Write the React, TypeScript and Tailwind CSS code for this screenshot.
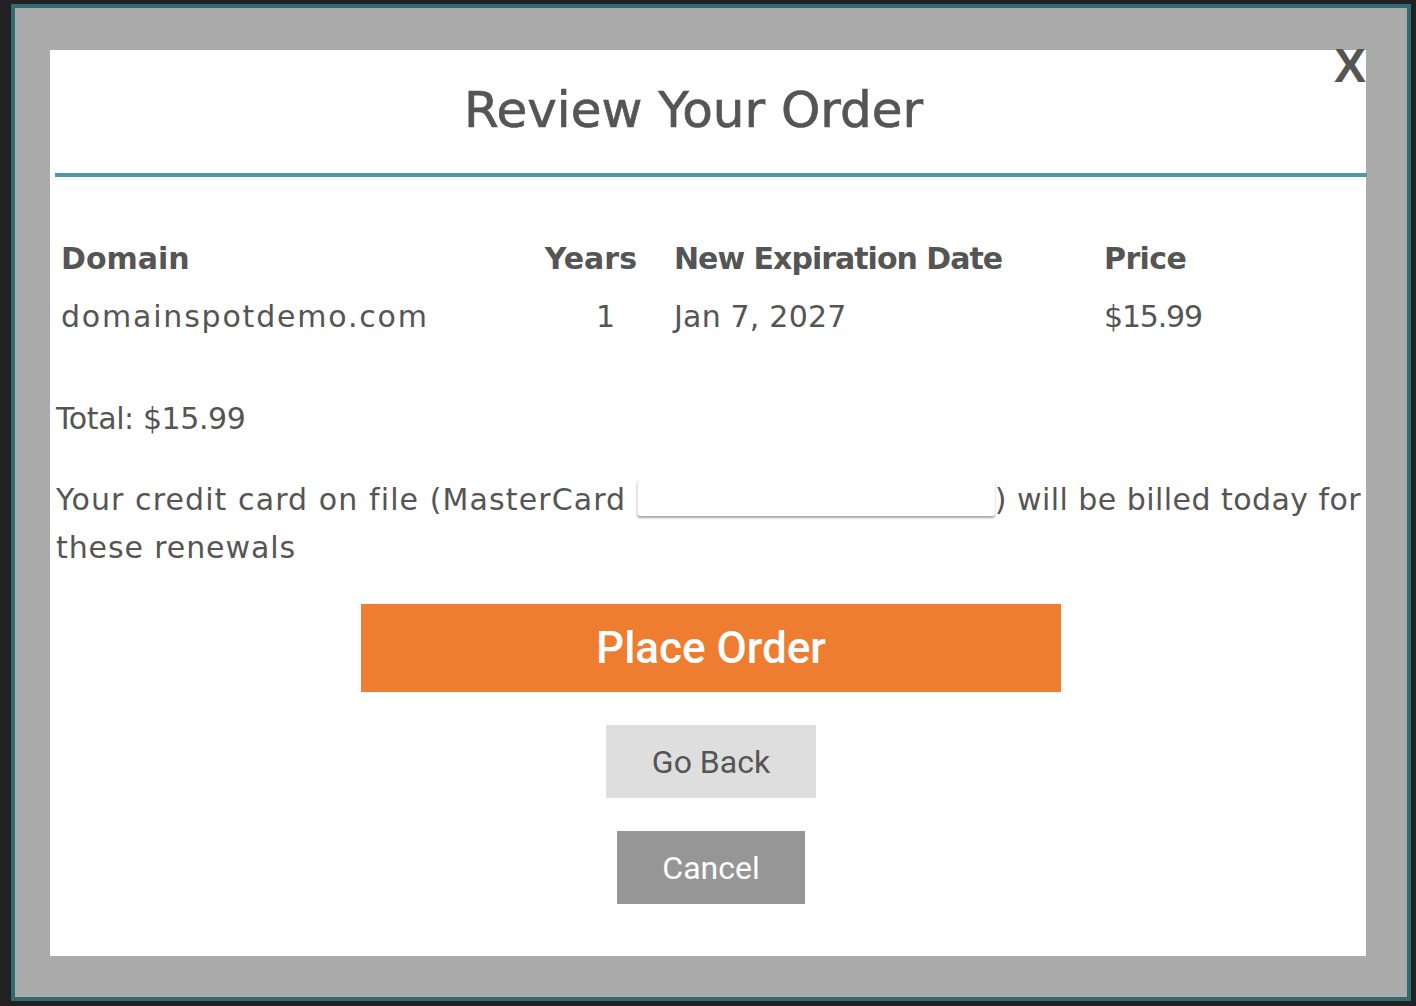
import React from "react";

const body = { fontFamily: '"DejaVu Sans", sans-serif' };
const btn = { fontFamily: 'Roboto, "Liberation Sans", sans-serif' };

export default function App() {
  return (
    <div className="w-full h-[1006px] bg-[#212121] pt-[4px] pl-[11px] overflow-hidden">
      <div className="w-[1400px] h-[997px] border-[4px] border-[#2f6b70] bg-[#ababab] pl-[35px] pt-[42px]">
        <div
          className="relative w-[1316px] h-[906px] bg-white flex flex-col text-[#555555]"
          style={body}
        >
          <span
            className="absolute right-0 top-[-8px] text-[48px] leading-[48px] font-bold text-[#555555]"
            style={{ fontFamily: '"Liberation Sans", Arial, sans-serif' }}
          >
            X
          </span>

          <div className="mt-[30px] pl-[5px] pr-[34px] text-center text-[50px] leading-[60px] [-webkit-text-stroke:0.7px_#555555]">
            Review Your Order
          </div>

          <div className="mt-[33px] ml-[5px] -mr-px h-[4px] bg-[#4a9ba3]" />

          <div className="pl-[6px] flex flex-col">
            <div className="mt-[53px] pl-[5px] grid grid-cols-[459px_117px_467px_1fr] text-[30px] leading-[48px]">
              <div className="py-[5px] font-bold">Domain</div>
              <div className="py-[5px] font-bold text-right">Years</div>
              <div className="py-[5px] font-bold pl-[37px] tracking-[-1px]">New Expiration Date</div>
              <div className="py-[5px] font-bold tracking-[-0.6px]">Price</div>

              <div className="py-[5px] tracking-[1.8px]">domainspotdemo.com</div>
              <div className="py-[5px] text-right pr-[22px]">1</div>
              <div className="py-[5px] pl-[37px] tracking-[0.2px]">Jan 7, 2027</div>
              <div className="py-[5px] tracking-[-1.2px]">$15.99</div>
            </div>

            <div className="mt-[49px] text-[30px] leading-[48px] tracking-[-0.4px]">Total: $15.99</div>

            <div className="mt-[33px] text-[30px] leading-[48px]">
              <div className="whitespace-nowrap">
                <span className="tracking-[1.1px]">Your credit card on file (MasterCard </span>
                <span className="inline-block w-[358px] h-[36px] align-[-6px] bg-white border-l border-[#e2e2e2] rounded-[3px] shadow-[0_2px_2px_rgba(0,0,0,0.35)]" />
                <span className="tracking-[0.45px]">) will be billed today for</span>
              </div>
              <div className="tracking-[0.9px]">these renewals</div>
            </div>

            <button
              className="mt-[32px] self-center w-[700px] h-[88px] bg-[#ee7d31] text-white text-[44px] font-medium flex items-center justify-center"
              style={btn}
            >
              Place Order
            </button>

            <button
              className="mt-[33px] self-center w-[210px] h-[73px] bg-[#dedede] text-[#555555] text-[32px] flex items-center justify-center"
              style={btn}
            >
              Go Back
            </button>

            <button
              className="mt-[33px] self-center w-[188px] h-[73px] bg-[#969696] text-white text-[32px] flex items-center justify-center"
              style={btn}
            >
              Cancel
            </button>
          </div>
        </div>
      </div>
    </div>
  );
}
